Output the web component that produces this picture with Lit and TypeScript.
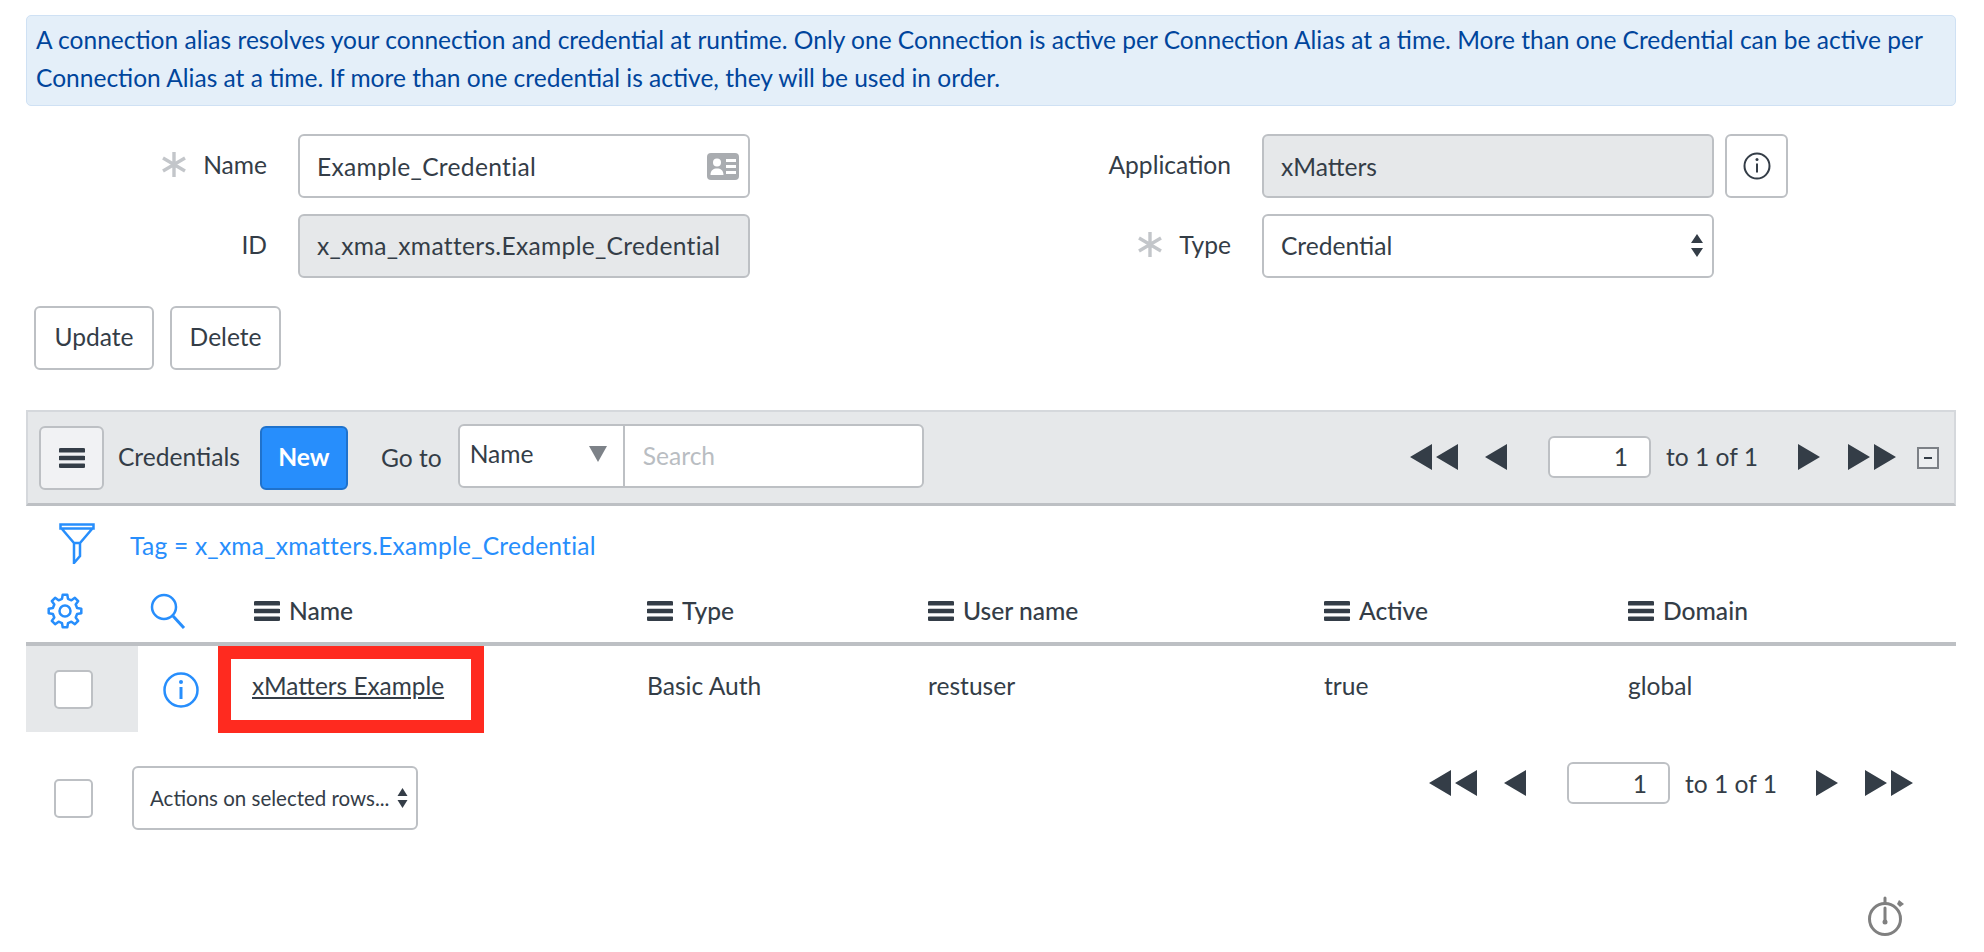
import { LitElement, html, css } from 'lit';
import { customElement } from 'lit/decorators.js';

const bars = (cls: string) => html`<svg class=${cls} viewBox="0 0 26 20"><path d="M1.5 0h23a1.5 1.5 0 0 1 0 4.6h-23a1.5 1.5 0 0 1 0-4.6zM1.5 7.7h23a1.5 1.5 0 0 1 0 4.6h-23a1.5 1.5 0 0 1 0-4.6zM1.5 15.4h23a1.5 1.5 0 0 1 0 4.6h-23a1.5 1.5 0 0 1 0-4.6z" fill="#343d47"/></svg>`;

const star = html`<svg class="star" viewBox="0 0 26 27"><path d="M13 1v25M2 7l22 13M24 7 2 20" stroke="#c3c6ca" stroke-width="3.4" fill="none"/></svg>`;

// outline gear, built from teeth around the centre
function gearPath() {
  const pts: string[] = [];
  const teeth = 8;
  for (let i = 0; i < teeth; i++) {
    const a = (i / teeth) * Math.PI * 2 - Math.PI / 2;
    const w = Math.PI / teeth;
    const p = (r: number, t: number) => `${(18 + r * Math.cos(t)).toFixed(1)} ${(18 + r * Math.sin(t)).toFixed(1)}`;
    pts.push(`${i === 0 ? 'M' : 'L'}${p(12.5, a - w * 0.62)}`);
    pts.push(`L${p(16.5, a - w * 0.36)}`);
    pts.push(`L${p(16.5, a + w * 0.36)}`);
    pts.push(`L${p(12.5, a + w * 0.62)}`);
  }
  return pts.join('') + 'Z';
}

const pager = () => html`
  <div class="pager">
    <svg class="tri-2" viewBox="0 0 48 26"><path d="M0 13 22 0v26zM26 13 48 0v26z" fill="#343d47"/></svg>
    <svg class="tri-1" viewBox="0 0 22 26"><path d="M0 13 22 0v26z" fill="#343d47"/></svg>
    <div class="page-input">1</div>
    <span class="page-text">to 1 of 1</span>
    <svg class="tri-1 next" viewBox="0 0 22 26"><path d="M22 13 0 0v26z" fill="#343d47"/></svg>
    <svg class="tri-2" viewBox="0 0 48 26"><path d="M22 13 0 0v26zM48 13 26 0v26z" fill="#343d47"/></svg>
  </div>
`;

@customElement('app-root')
export class AppRoot extends LitElement {
  static styles = css`
    :host {
      display: block;
      width: 1984px;
      height: 952px;
      box-sizing: border-box;
      padding: 15px 28px 0 26px;
      background: #fff;
      color: #343d47;
      font-family: Lato, "Liberation Sans", sans-serif;
      font-size: 24.6px;
      overflow: hidden;
    }
    svg { display: block; flex: none; }
    .alert {
      box-sizing: border-box;
      height: 91px;
      padding: 5px 10px 0 9px;
      background: #e4eff9;
      border: 1px solid #cfe1f4;
      border-radius: 5px;
      color: #00459c;
      font-size: 24.54px;
      line-height: 38px;
    }
    .form {
      display: grid;
      grid-template-columns: 241px 452px 450px 526px;
      column-gap: 31px;
      row-gap: 16px;
      margin-top: 28px;
    }
    .label {
      display: flex;
      justify-content: flex-end;
      align-items: center;
      gap: 16px;
      height: 64px;
      padding-bottom: 4px;
      box-sizing: border-box;
    }
    .star { width: 26px; height: 27px; }
    .field {
      box-sizing: border-box;
      height: 64px;
      display: flex;
      align-items: center;
      justify-content: space-between;
      padding: 0 9px 0 17px;
      border: 2px solid #bdc0c4;
      border-radius: 6px;
      background: #fff;
    }
    .field.ro { background: #e6e8ea; }
    .field.fixed { width: 452px; }
    .field.raised { padding-bottom: 2px; }
    .spaced { letter-spacing: 0.3px; }
    .app-cell { display: flex; gap: 11px; }
    .info-btn {
      box-sizing: border-box;
      width: 63px;
      height: 64px;
      border: 2px solid #bdc0c4;
      border-radius: 6px;
      display: flex;
      align-items: center;
      justify-content: center;
    }
    .actions { display: flex; gap: 16px; margin: 28px 0 0 8px; }
    .btn {
      box-sizing: border-box;
      height: 64px;
      padding: 0 18.5px 3px;
      display: flex;
      align-items: center;
      border: 2px solid #bdc0c4;
      border-radius: 6px;
      background: #fff;
    }
    .btn.del { padding: 0 17.5px 3px; }
    .toolbar {
      box-sizing: border-box;
      height: 96px;
      margin-top: 40px;
      display: flex;
      align-items: center;
      padding: 0 15px 0 11px;
      background: #e6e8ea;
      border: 2px solid #d5d8dc;
      border-bottom: 3px solid #bdc0c4;
    }
    .menu-btn {
      box-sizing: border-box;
      width: 65px;
      height: 64px;
      display: flex;
      align-items: center;
      justify-content: center;
      background: #f1f2f4;
      border: 2px solid #bdc0c4;
      border-radius: 6px;
    }
    .bars { width: 26px; height: 20px; }
    .title { margin: 0 20px 2px 14px; }
    .new {
      box-sizing: border-box;
      width: 88px;
      height: 64px;
      padding-bottom: 3px;
      display: flex;
      align-items: center;
      justify-content: center;
      background: #278efc;
      border: 2px solid #1f72cc;
      border-radius: 6px;
      color: #fff;
      font-weight: 700;
    }
    .goto { margin: 0 16px 0 33px; }
    .search-group {
      box-sizing: border-box;
      display: flex;
      width: 466px;
      height: 64px;
      margin-top: -4px;
      border: 2px solid #bdc0c4;
      border-radius: 6px;
      background: #fff;
    }
    .search-select {
      box-sizing: border-box;
      width: 165px;
      display: flex;
      align-items: center;
      justify-content: space-between;
      padding: 0 16px 4px 10px;
      border-right: 2px solid #bdc0c4;
    }
    .search-input {
      display: flex;
      align-items: center;
      padding-left: 18px;
      color: #b9bdc2;
    }
    .pager { display: flex; align-items: center; }
    .toolbar .pager { margin: 0 0 2px auto; }
    .tri-2 { width: 48px; height: 26px; }
    .tri-1 { width: 22px; height: 26px; margin-left: 27px; }
    .tri-1.next { margin: 0 28px 0 40px; }
    .footer .tri-1.next { margin: 0 27px 0 39px; }
    .page-input {
      box-sizing: border-box;
      width: 103px;
      height: 42px;
      margin: 0 15px 0 41px;
      padding-right: 21px;
      display: flex;
      align-items: center;
      justify-content: flex-end;
      background: #fff;
      border: 2px solid #bdc0c4;
      border-radius: 6px;
    }
    .collapse {
      box-sizing: border-box;
      width: 22px;
      height: 22px;
      margin-left: 21px;
      border: 2px solid #7c8086;
      background: #eceef0;
      display: flex;
      align-items: center;
      justify-content: center;
    }
    .collapse i { display: block; width: 8px; height: 2px; background: #343d47; }
    .filter {
      display: flex;
      align-items: center;
      gap: 35px;
      height: 82px;
      padding-left: 33px;
      color: #278efc;
      padding-bottom: 4px;
      box-sizing: border-box;
    }
    .filter svg { width: 36px; height: 41px; margin-top: -4px; }
    .filter span { letter-spacing: 0.22px; }
    .table {
      display: grid;
      grid-template-columns: 112px 80px 429px 281px 396px 304px 1fr;
    }
    .head {
      box-sizing: border-box;
      height: 58px;
      display: flex;
      align-items: center;
      gap: 9px;
      padding-bottom: 8px;
      border-bottom: 4px solid #bdc0c4;
      font-weight: 500;
    }
    .head span { margin-bottom: 2px; }
    .head.name { padding-left: 36px; }
    .head.gear { padding-left: 21px; }
    .head.find { padding-left: 12px; }
    .cell {
      height: 87px;
      display: flex;
      align-items: center;
      box-sizing: border-box;
      padding-bottom: 8px;
    }
    .cell.check { background: #e6e8ea; padding: 0 0 0 28px; height: 86px; }
    .cell.info { padding: 0 0 0 25px; }
    .cell.wrap { padding: 0; }
    .red {
      width: 266px;
      padding: 0 0 8px 21px;
      border: 13px solid #ff2a1f;
      white-space: nowrap;
      font-size: 24.4px;
    }
    .red a { color: #343d47; text-decoration: underline; }
    .box {
      box-sizing: border-box;
      width: 39px;
      height: 39px;
      background: #fff;
      border: 2px solid #bdc0c4;
      border-radius: 5px;
    }
    .footer {
      display: flex;
      align-items: center;
      margin-top: 33px;
      padding-left: 28px;
    }
    .rows-select {
      box-sizing: border-box;
      width: 286px;
      height: 64px;
      margin-left: 39px;
      padding: 0 8px 0 16px;
      display: flex;
      align-items: center;
      justify-content: space-between;
      border: 2px solid #bdc0c4;
      border-radius: 6px;
      font-size: 20.5px;
      white-space: nowrap;
    }
    .footer .pager { margin: -30px 43px 0 auto; }
    .timer { display: flex; justify-content: flex-end; margin: 66px 52px 0 0; }
  `;

  render() {
    return html`
      <div class="alert">A connection alias resolves your connection and credential at runtime. Only one Connection is active per Connection Alias at a time. More than one Credential can be active per Connection Alias at a time. If more than one credential is active, they will be used in order.</div>

      <div class="form">
        <div class="label">${star}<span>Name</span></div>
        <div class="field">
          <span class="spaced">Example_Credential</span>
          <svg width="32" height="27" viewBox="0 0 32 27"><rect width="32" height="27" rx="4" fill="#a9acb0"/><circle cx="10" cy="9.5" r="4" fill="#fff"/><path d="M3.5 22c0-5 3-6.5 6.500-6.500s6.500 1.500 6.500 6.500zM19 6h10v3H19zM19 12h10v3H19zM19 18h10v3H19z" fill="#fff"/></svg>
        </div>
        <div class="label"><span>Application</span></div>
        <div class="app-cell">
          <div class="field ro fixed">xMatters</div>
          <div class="info-btn">
            <svg width="28" height="28" viewBox="0 0 28 28"><circle cx="14" cy="14" r="12.500" fill="none" stroke="#343d47" stroke-width="2"/><path d="M14 11.500v9" stroke="#343d47" stroke-width="2"/><circle cx="14" cy="7.500" r="1.500" fill="#343d47"/></svg>
          </div>
        </div>
        <div class="label"><span>ID</span></div>
        <div class="field ro raised"><span class="spaced">x_xma_xmatters.Example_Credential</span></div>
        <div class="label">${star}<span>Type</span></div>
        <div class="field fixed raised">
          <span>Credential</span>
          <svg width="14" height="23" viewBox="0 0 14 23" style="margin-right:-1px"><path d="M7 0l6 9H1zM7 23l-6-9h12z" fill="#343d47"/></svg>
        </div>
      </div>

      <div class="actions">
        <div class="btn">Update</div>
        <div class="btn del">Delete</div>
      </div>

      <div class="toolbar">
        <div class="menu-btn">${bars('bars')}</div>
        <span class="title">Credentials</span>
        <div class="new">New</div>
        <span class="goto">Go to</span>
        <div class="search-group">
          <div class="search-select">
            <span>Name</span>
            <svg width="18" height="16" viewBox="0 0 18 16"><path d="M0 0h18l-9 16z" fill="#7d8288"/></svg>
          </div>
          <div class="search-input">Search</div>
        </div>
        ${pager()}
        <div class="collapse"><i></i></div>
      </div>

      <div class="filter">
        <svg viewBox="0 0 36 41" fill="none" stroke="#278efc" stroke-width="2.500"><path d="M1.500 1.500h33v4h-33zM3 6l12 14h6L33 6M15 20h6v13l-6 7z"/></svg>
        <span>Tag = x_xma_xmatters.Example_Credential</span>
      </div>

      <div class="table">
        <div class="head gear">
          <svg width="36" height="36" viewBox="0 0 36 36" fill="none" stroke="#278efc" stroke-width="2.500"><path d=${gearPath()} stroke-linejoin="round"/><circle cx="18" cy="18" r="5.500"/></svg>
        </div>
        <div class="head find">
          <svg width="36" height="36" viewBox="0 0 36 36" fill="none" stroke="#278efc"><circle cx="14" cy="14" r="12" stroke-width="2.500"/><path d="M23 23l11 12" stroke-width="3"/></svg>
        </div>
        <div class="head name">${bars('bars')}<span>Name</span></div>
        <div class="head">${bars('bars')}<span>Type</span></div>
        <div class="head">${bars('bars')}<span>User name</span></div>
        <div class="head">${bars('bars')}<span>Active</span></div>
        <div class="head">${bars('bars')}<span>Domain</span></div>

        <div class="cell check"><div class="box"></div></div>
        <div class="cell info">
          <svg width="36" height="36" viewBox="0 0 36 36"><circle cx="18" cy="18" r="16.500" fill="none" stroke="#278efc" stroke-width="2.500"/><path d="M18 15v12" stroke="#278efc" stroke-width="3"/><circle cx="18" cy="10" r="2" fill="#278efc"/></svg>
        </div>
        <div class="cell wrap"><div class="cell red"><a>xMatters Example</a></div></div>
        <div class="cell">Basic Auth</div>
        <div class="cell">restuser</div>
        <div class="cell">true</div>
        <div class="cell">global</div>
      </div>

      <div class="footer">
        <div class="box"></div>
        <div class="rows-select">
          <span>Actions on selected rows...</span>
          <svg width="11" height="20" viewBox="0 0 11 20"><path d="M5.500 0l5 8H.5zM5.500 20l-5-8h10z" fill="#343d47"/></svg>
        </div>
        ${pager()}
      </div>

      <div class="timer">
        <svg width="36" height="40" viewBox="0 0 36 40" fill="none" stroke="#808080">
          <circle cx="17" cy="23" r="15.500" stroke-width="3"/>
          <path d="M17 7V2M17 12v13" stroke-width="3" stroke-linecap="round"/>
          <circle cx="17" cy="26" r="2.500" fill="#808080" stroke="none"/>
          <path d="M31 4l5 4-4 3-3-3z" fill="#808080" stroke="none"/>
        </svg>
      </div>
    `;
  }
}
